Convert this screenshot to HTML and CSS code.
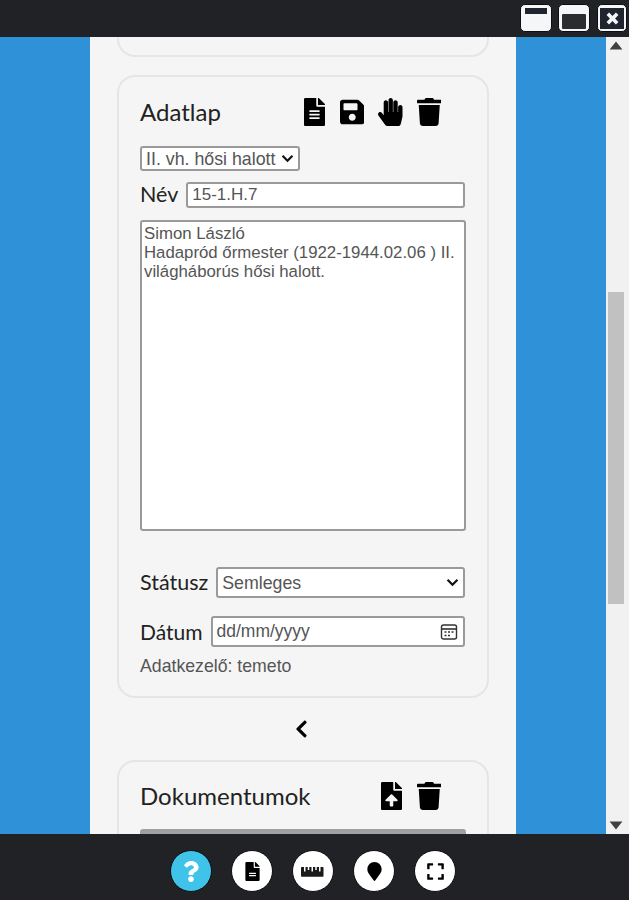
FILE: index.html
```html
<!DOCTYPE html>
<html lang="hu">
<head>
<meta charset="utf-8">
<title>Adatlap</title>
<link rel="stylesheet" href="styles.css">
</head>
<body>
<div class="app">
  <header class="topbar">
    <button class="win-btn" aria-label="Felső"><span class="win-top"></span></button>
    <button class="win-btn" aria-label="Alsó"><span class="win-bottom"></span></button>
    <button class="win-btn win-last" aria-label="Bezár">
      <span class="win-close">
        <svg viewBox="0 0 20 20" class="win-x"><path d="M3 6l3-3 4 4 4-4 3 3-4 4 4 4-3 3-4-4-4 4-3-3 4-4z"/></svg>
      </span>
    </button>
  </header>

  <main class="stage">
    <section class="panel">
      <div class="card card-stub"></div>

      <div class="card card-main">
        <div class="card-head">
          <h2 class="title">Adatlap</h2>
          <div class="tools">
            <svg class="ico ico-file" viewBox="0 0 384 512"><path d="M224 136V0H24C10.7 0 0 10.7 0 24v464c0 13.3 10.7 24 24 24h336c13.3 0 24-10.7 24-24V160H248c-13.2 0-24-10.8-24-24zm64 236c0 6.6-5.4 12-12 12H108c-6.6 0-12-5.4-12-12v-8c0-6.6 5.4-12 12-12h168c6.6 0 12 5.4 12 12v8zm0-64c0 6.6-5.4 12-12 12H108c-6.6 0-12-5.4-12-12v-8c0-6.6 5.4-12 12-12h168c6.6 0 12 5.4 12 12v8zm0-72v8c0 6.6-5.4 12-12 12H108c-6.6 0-12-5.4-12-12v-8c0-6.6 5.4-12 12-12h168c6.6 0 12 5.4 12 12zm96-114.1v6.1H256V0h6.1c6.4 0 12.5 2.5 17 7l97.9 98c4.5 4.5 7 10.6 7 16.9z"/></svg>
            <svg class="ico" viewBox="0 0 448 512"><path d="M433.941 129.941l-83.882-83.882A48 48 0 0 0 316.118 32H48C21.49 32 0 53.49 0 80v352c0 26.51 21.49 48 48 48h352c26.51 0 48-21.49 48-48V163.882a48 48 0 0 0-14.059-33.941zM224 416c-35.346 0-64-28.654-64-64 0-35.346 28.654-64 64-64s64 28.654 64 64c0 35.346-28.654 64-64 64zm96-304.52V212c0 6.627-5.373 12-12 12H76c-6.627 0-12-5.373-12-12V108c0-6.627 5.373-12 12-12h228.52c3.183 0 6.235 1.264 8.485 3.515l3.48 3.48A11.996 11.996 0 0 1 320 111.48z"/></svg>
            <svg class="ico" viewBox="0 0 448 512"><path d="M408.781 128.007C386.356 127.578 368 146.36 368 168.79V256h-8V79.79c0-22.43-18.356-41.212-40.781-40.783C297.488 39.423 280 57.169 280 79v177h-8V40.79C272 18.36 253.644-.422 231.219.007 209.488.423 192 18.169 192 40v216h-8V80.79c0-22.43-18.356-41.212-40.781-40.783C121.488 40.423 104 58.169 104 80v235.992l-31.648-43.519c-12.993-17.866-38.009-21.817-55.877-8.823-17.865 12.994-21.815 38.01-8.822 55.877l125.601 172.705A48 48 0 0 0 172.073 512h197.59c22.274 0 41.622-15.324 46.724-37.006l26.508-112.66a192.011 192.011 0 0 0 5.104-43.975V168c.001-22.43-18.355-41.212-39.219-39.993z"/></svg>
            <svg class="ico" viewBox="0 0 448 512"><path d="M432 32H312l-9.4-18.7A24 24 0 0 0 281.1 0H166.8a23.72 23.72 0 0 0-21.4 13.3L136 32H16A16 16 0 0 0 0 48v32a16 16 0 0 0 16 16h416a16 16 0 0 0 16-16V48a16 16 0 0 0-16-16zM53.2 467a48 48 0 0 0 47.9 45h245.8a48 48 0 0 0 47.9-45L416 128H32z"/></svg>
          </div>
        </div>

        <select class="field type-select">
          <option>II. vh. hősi halott</option>
        </select>

        <div class="row row-name">
          <label class="label">Név</label>
          <input class="field grow" type="text" value="15-1.H.7">
        </div>

        <textarea class="field note">Simon László
Hadapród őrmester (1922-1944.02.06 ) II. világháborús hősi halott.</textarea>

        <div class="row row-status">
          <label class="label">Státusz</label>
          <select class="field grow tall"><option>Semleges</option></select>
        </div>

        <div class="row row-date">
          <label class="label label-date">Dátum</label>
          <div class="field grow tall date">
            <span class="date-text">dd/mm/yyyy</span>
            <svg class="cal" viewBox="0 0 18 18"><rect x="1.5" y="2" width="15" height="14" rx="2" fill="none" stroke="#333" stroke-width="1.4"/><path d="M2 6h14" stroke="#333" stroke-width="1.6"/><path d="M4.5 9h2M8 9h2M11.500 9h2M4.500 12.500h2M8 12.500h2" stroke="#333" stroke-width="1.300"/></svg>
          </div>
        </div>

        <p class="owner">Adatkezelő: temeto</p>
      </div>

      <div class="pager">
        <svg class="chev" viewBox="0 0 320 512"><path d="M34.52 239.03L228.87 44.69c9.37-9.37 24.57-9.37 33.94 0l22.67 22.67c9.36 9.36 9.37 24.52.04 33.9L131.49 256l154.02 154.75c9.34 9.38 9.32 24.54-.04 33.9l-22.67 22.67c-9.37 9.37-24.57 9.37-33.94 0L34.52 272.97c-9.37-9.37-9.37-24.57 0-33.94z"/></svg>
      </div>

      <div class="card card-docs">
        <div class="card-head">
          <h2 class="title">Dokumentumok</h2>
          <div class="tools">
            <svg class="ico ico-file" viewBox="0 0 384 512"><path d="M224 136V0H24C10.7 0 0 10.7 0 24v464c0 13.3 10.7 24 24 24h336c13.3 0 24-10.7 24-24V160H248c-13.2 0-24-10.8-24-24zm65.18 216.01H224v80c0 8.84-7.16 16-16 16h-32c-8.84 0-16-7.16-16-16v-80H94.82c-14.28 0-21.41-17.29-11.27-27.36l96.42-95.7c6.65-6.61 17.39-6.61 24.04 0l96.42 95.7c10.15 10.07 3.03 27.36-11.25 27.36zM377 105L279.1 7c-4.5-4.5-10.6-7-17-7H256v128h128v-6.1c0-6.3-2.5-12.4-7-16.9z"/></svg>
            <svg class="ico" viewBox="0 0 448 512"><path d="M432 32H312l-9.4-18.7A24 24 0 0 0 281.1 0H166.8a23.72 23.72 0 0 0-21.4 13.3L136 32H16A16 16 0 0 0 0 48v32a16 16 0 0 0 16 16h416a16 16 0 0 0 16-16V48a16 16 0 0 0-16-16zM53.2 467a48 48 0 0 0 47.9 45h245.8a48 48 0 0 0 47.9-45L416 128H32z"/></svg>
          </div>
        </div>
        <div class="doc-list"></div>
      </div>
    </section>

    <aside class="scrollbar">
      <svg class="arrow" viewBox="0 0 10 10"><path d="M5 2.500L9 7.500H1z"/></svg>
      <div class="track"><div class="thumb"></div></div>
      <svg class="arrow" viewBox="0 0 10 10"><path d="M5 7.500L1 2.500h8z"/></svg>
    </aside>
  </main>

  <footer class="bottombar">
    <button class="round round-help" aria-label="Súgó">
      <svg class="round-ico" viewBox="0 0 384 512"><path d="M202.021 0C122.202 0 70.503 32.703 29.914 91.026c-7.363 10.58-5.093 25.086 5.178 32.874l43.138 32.709c10.373 7.865 25.132 6.026 33.253-4.148 25.049-31.381 43.63-49.449 82.757-49.449 30.764 0 68.816 19.799 68.816 49.631 0 22.552-18.617 34.134-48.993 51.164-35.423 19.86-82.299 44.576-82.299 106.405V320c0 13.255 10.745 24 24 24h72.471c13.255 0 24-10.745 24-24v-5.773c0-42.86 125.268-44.645 125.268-160.627C377.504 66.256 286.902 0 202.021 0zM192 373.459c-38.196 0-69.271 31.075-69.271 69.271 0 38.195 31.075 69.27 69.271 69.27s69.271-31.075 69.271-69.271-31.075-69.27-69.271-69.27z"/></svg>
    </button>
    <button class="round" aria-label="Adatlap">
      <svg class="round-ico" viewBox="0 0 384 512"><path d="M224 136V0H24C10.7 0 0 10.7 0 24v464c0 13.3 10.7 24 24 24h336c13.3 0 24-10.700 24-24V160H248c-13.200 0-24-10.800-24-24zm64 236c0 6.600-5.400 12-12 12H108c-6.600 0-12-5.400-12-12v-8c0-6.600 5.400-12 12-12h168c6.600 0 12 5.400 12 12v8zm0-64c0 6.600-5.400 12-12 12H108c-6.600 0-12-5.400-12-12v-8c0-6.600 5.400-12 12-12h168c6.600 0 12 5.400 12 12v8zm96-186.100v6.100H256V0h6.100c6.400 0 12.500 2.500 17 7l97.900 98c4.500 4.500 7 10.600 7 16.900z"/></svg>
    </button>
    <button class="round" aria-label="Mérés">
      <svg class="round-ruler" viewBox="0 0 32 14"><path d="M1 1h3v6h2V1h3v4h2V1h3v6h2V1h3v4h2V1h3v6h2V1h3a1 1 0 0 1 1 1v11a1 1 0 0 1-1 1H1a1 1 0 0 1-1-1V2a1 1 0 0 1 1-1z"/></svg>
    </button>
    <button class="round" aria-label="Hely">
      <svg class="round-ico" viewBox="0 0 384 512"><path d="M172.268 501.67C26.97 291.031 0 269.413 0 192 0 85.961 85.961 0 192 0s192 85.961 192 192c0 77.413-26.97 99.031-172.268 309.67-9.535 13.774-29.93 13.773-39.464 0z"/></svg>
    </button>
    <button class="round" aria-label="Teljes képernyő">
      <svg class="round-ico" viewBox="0 0 448 512"><path d="M0 180V56c0-13.3 10.7-24 24-24h124c6.6 0 12 5.4 12 12v40c0 6.6-5.4 12-12 12H64v84c0 6.6-5.4 12-12 12H12c-6.6 0-12-5.4-12-12zM288 44v40c0 6.6 5.4 12 12 12h84v84c0 6.6 5.4 12 12 12h40c6.6 0 12-5.4 12-12V56c0-13.3-10.7-24-24-24H300c-6.6 0-12 5.4-12 12zm148 276h-40c-6.6 0-12 5.4-12 12v84h-84c-6.6 0-12 5.4-12 12v40c0 6.6 5.4 12 12 12h124c13.3 0 24-10.7 24-24V332c0-6.6-5.4-12-12-12zM160 468v-40c0-6.6-5.4-12-12-12H64v-84c0-6.6-5.4-12-12-12H12c-6.600 0-12 5.400-12 12v124c0 13.300 10.700 24 24 24h124c6.600 0 12-5.400 12-12z"/></svg>
    </button>
  </footer>
</div>
</body>
</html>
```

FILE: styles.css
```css
* { box-sizing: border-box; }
html, body { margin: 0; height: 100%; }
body { font-family: "Liberation Sans", Arial, sans-serif; background: #202226; overflow: hidden; }

.app { display: flex; flex-direction: column; width: 629px; height: 900px; }

.topbar {
  flex: 0 0 37px;
  display: flex;
  justify-content: flex-end;
  align-items: flex-start;
  gap: 6px;
  padding: 4px 2px 0 0;
  background: #202226;
}
.win-btn {
  width: 32px;
  height: 28px;
  padding: 0;
  border: 1px solid #0c0d10;
  border-radius: 5px;
  background: #f5f6f8;
  display: flex;
  justify-content: center;
}
.win-last { width: 30px; margin-left: 1px; }
.win-top { width: 22px; height: 6px; margin-top: 3px; background: #20242e; }
.win-bottom { width: 24px; height: 15px; margin-top: 9px; background: #2a2c30; border-radius: 1px; }
.win-close { width: 24px; height: 21px; margin-top: 3px; background: #20242e; display: flex; align-items: center; justify-content: center; }
.win-x { width: 17px; height: 17px; fill: #f5f6f8; }

.stage { flex: 1; min-height: 0; display: flex; background: #2f92d8; }

.panel {
  flex: none;
  width: 426px;
  margin: 0 90px;
  padding: 0 27px;
  background: #f5f5f5;
  overflow: hidden;
}
.card { border: 2px solid #e5e5e5; border-radius: 18px; background: #f5f5f5; }
.card-stub { height: 20px; border-top: 0; border-radius: 0 0 18px 18px; margin-bottom: 18px; }
.card-main { height: 623px; padding: 0 21px; }
.card-docs { height: 120px; padding: 0 21px; }

.card-head {
  display: flex;
  justify-content: space-between;
  align-items: center;
  padding-right: 25px;
  height: 69px;
}
.card-docs .card-head { height: 67px; }
.title { margin: 0; font: 400 24px/1 Lato, "Open Sans", sans-serif; color: #222; }
.tools { display: flex; gap: 14px; align-items: center; }
.ico { height: 28px; width: 24.500px; fill: #000; display: block; }
.ico-file { width: 23px; }

.field {
  border: 2px solid #9a9a9a;
  border-radius: 3px;
  background: #fff;
  color: #555;
  font: 17px "Liberation Sans", Arial, sans-serif;
  outline: none;
}
select.field {
  appearance: none;
  font-size: 17.800px;
  padding: 0 22px 0 4px;
  background: #fff url("data:image/svg+xml,%3Csvg xmlns='http://www.w3.org/2000/svg' viewBox='0 0 14 10'%3E%3Cpath d='M1.500 2l5.500 5.500L12.500 2' fill='none' stroke='%23111' stroke-width='2.400'/%3E%3C/svg%3E") no-repeat right 4px center / 13px 9px;
}
.type-select { display: block; width: 160px; height: 25px; }

.row { display: flex; align-items: center; gap: 8px; }
.row-name { margin-top: 11px; }
.row-name .field { height: 26px; padding: 0 4px; }
.row-status { margin-top: 36px; }
.row-date { margin-top: 18px; }
.grow { flex: 1; min-width: 0; margin-right: 1px; }
.tall { height: 31px; }
.label { font: 400 21.500px/1 Lato, "Open Sans", sans-serif; color: #222; }
.label-date { font-size: 21px; }

.note {
  display: block;
  width: 326px;
  height: 311px;
  margin: 12px 0 0 0;
  padding: 2px;
  font-size: 16.800px;
  line-height: 19px;
  resize: none;
}
.date { display: flex; align-items: center; justify-content: space-between; padding: 0 5px 0 4px; font-size: 17.500px; }
.cal { width: 18px; height: 18px; }

.owner { margin: 9px 0 0; font-size: 17.700px; line-height: 20px; color: #555; }

.pager { height: 62px; display: flex; align-items: center; justify-content: center; padding-right: 3px; }
.chev { height: 20px; width: 13px; fill: #000; }

.doc-list { height: 30px; border: 2px solid #a0a0a0; border-top-width: 5px; border-radius: 3px 3px 0 0; background: #fff; }

.scrollbar {
  flex: 1;
  display: flex;
  flex-direction: column;
  align-items: flex-start;
  background: #f1f1f1;
  padding-left: 2px;
}
.arrow { width: 16px; height: 17px; fill: #404040; flex: none; }
.track { flex: 1; width: 16px; }
.thumb { width: 16px; height: 312px; margin-top: 238px; background: #c1c1c1; }

.bottombar {
  flex: 0 0 66px;
  display: flex;
  justify-content: center;
  align-items: center;
  gap: 19px;
  padding: 8px 3px 0 0;
  background: #202226;
}
.round {
  width: 42px;
  height: 42px;
  padding: 0;
  border: 1px solid #0c0d10;
  border-radius: 50%;
  background: #fff;
  display: flex;
  align-items: center;
  justify-content: center;
}
.round-ico { height: 19px; width: 19px; fill: #000; }
.round-ruler { width: 24px; height: 11px; fill: #1a1a1a; }
.round-help { background: #3fc3e8; }
.round-help .round-ico { height: 21px; width: 16px; fill: #fff; }
```
